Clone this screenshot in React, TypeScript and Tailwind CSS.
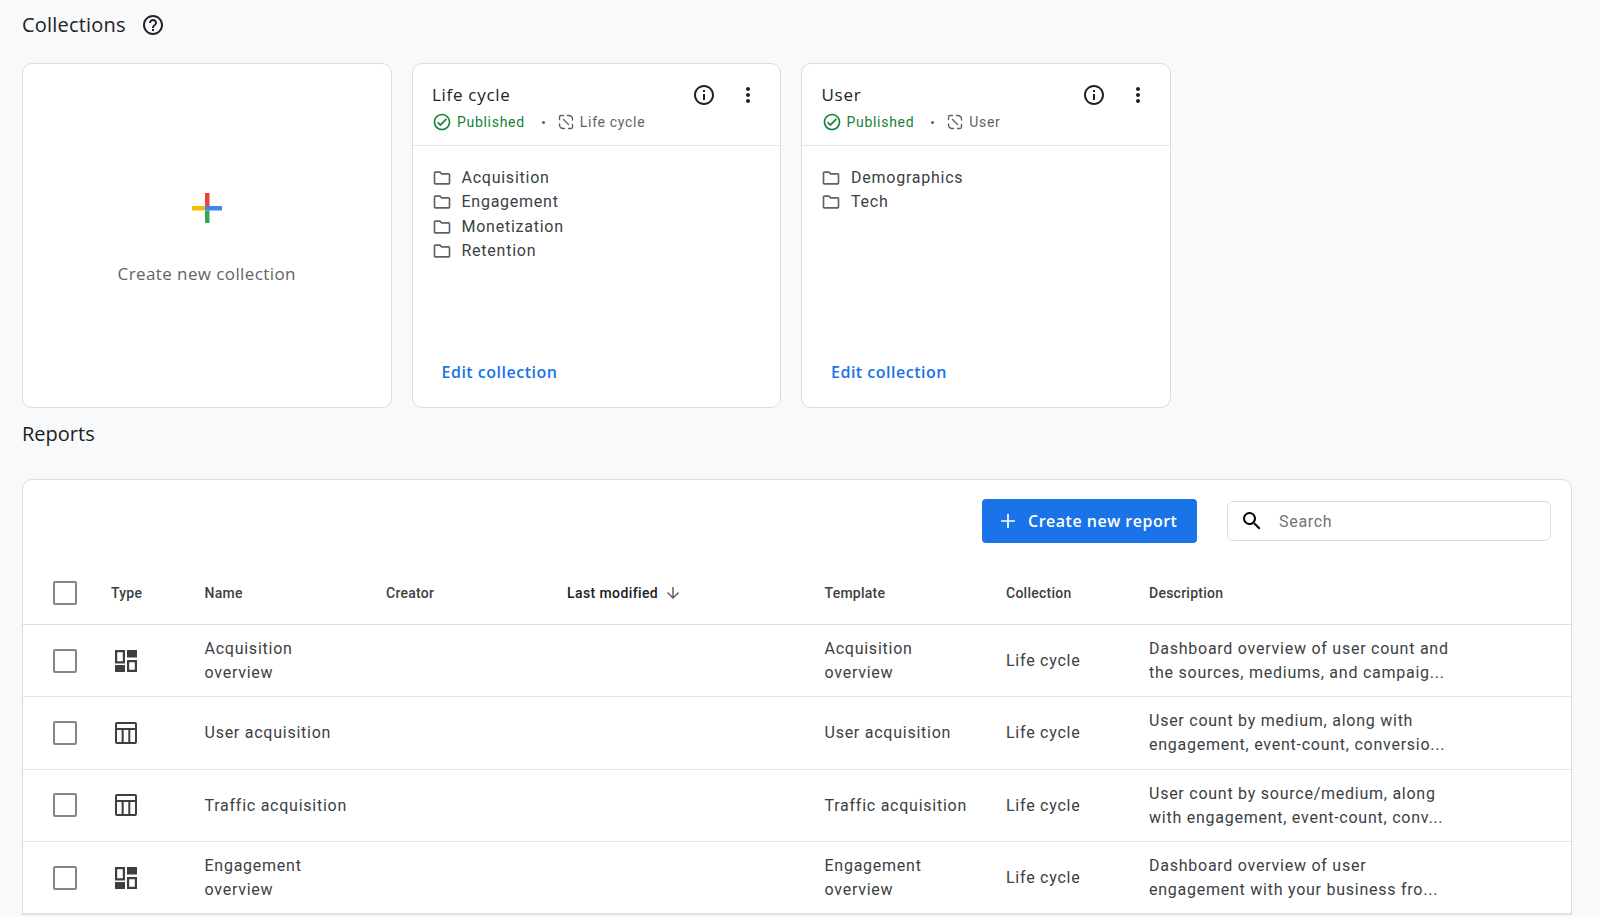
import React from "react";

const roboto = "font-['Roboto',sans-serif]";
const gsans = "font-['Open_Sans',sans-serif]";

function Help() {
  return (
    <svg width="24" height="24" viewBox="0 0 24 24" fill="#202124">
      <path d="M11 18h2v-2h-2v2zm1-16C6.48 2 2 6.48 2 12s4.48 10 10 10 10-4.48 10-10S17.52 2 12 2zm0 18c-4.41 0-8-3.59-8-8s3.59-8 8-8 8 3.59 8 8-3.59 8-8 8zm0-14c-2.21 0-4 1.79-4 4h2c0-1.1.9-2 2-2s2 .9 2 2c0 2-3 1.75-3 5h2c0-2.25 3-2.5 3-5 0-2.21-1.79-4-4-4z" />
    </svg>
  );
}
function Info() {
  return (
    <svg width="24" height="24" viewBox="0 0 24 24" fill="#202124">
      <path d="M11 7h2v2h-2zm0 4h2v6h-2zm1-9C6.48 2 2 6.48 2 12s4.48 10 10 10 10-4.48 10-10S17.52 2 12 2zm0 18c-4.41 0-8-3.59-8-8s3.59-8 8-8 8 3.59 8 8-3.59 8-8 8z" />
    </svg>
  );
}
function More() {
  return (
    <svg width="24" height="24" viewBox="0 0 24 24" fill="#202124">
      <path d="M12 8c1.1 0 2-.9 2-2s-.9-2-2-2-2 .9-2 2 .9 2 2 2zm0 2c-1.1 0-2 .9-2 2s.9 2 2 2 2-.9 2-2-.9-2-2-2zm0 6c-1.1 0-2 .9-2 2s.9 2 2 2 2-.9 2-2-.9-2-2-2z" />
    </svg>
  );
}
function Check() {
  return (
    <svg width="20" height="20" viewBox="0 0 24 24" fill="#188038">
      <path d="M12 2C6.48 2 2 6.48 2 12s4.48 10 10 10 10-4.48 10-10S17.52 2 12 2zm0 18c-4.41 0-8-3.59-8-8s3.59-8 8-8 8 3.59 8 8-3.59 8-8 8zm4.59-12.42L10 14.17l-2.59-2.58L6 13l4 4 8-8z" />
    </svg>
  );
}
function Linked() {
  return (
    <svg width="18" height="18" viewBox="0 0 18 18" fill="none" stroke="#5f6368" strokeWidth="1.4" strokeLinecap="round">
      <path d="M6.500 2.500H4A1.500 1.500 0 0 0 2.500 4v2.500" />
      <path d="M11.500 15.500H14a1.500 1.500 0 0 0 1.500-1.500v-2.500" />
      <path d="M10.500 2.500H12a3.500 3.500 0 0 1 3.500 3.500v1" />
      <path d="M7.500 15.500H6A3.500 3.500 0 0 1 2.500 12v-1" />
      <path d="M6.500 6.500l5 5" />
    </svg>
  );
}
function Folder() {
  return (
    <svg width="20" height="20" viewBox="0 0 24 24" fill="#5f6368">
      <path d="M20 6h-8l-2-2H4c-1.100 0-2 .9-2 2v12c0 1.100.9 2 2 2h16c1.100 0 2-.9 2-2V8c0-1.100-.9-2-2-2zm0 12H4V6h5.170l2 2H20v10z" />
    </svg>
  );
}
function Dash() {
  return (
    <svg width="24" height="24" viewBox="0 0 24 24">
      <path fill="#3c4043" fillRule="evenodd" d="M1 1h10v13.500H1V1zm2.200 2.200v9.100h5.600V3.200H3.200z" />
      <path fill="#3c4043" d="M13 1h10v7.500H13zM1 16h10v7H1z" />
      <path fill="#3c4043" fillRule="evenodd" d="M13 11h10v12H13V11zm2.200 2.200v7.600h5.600v-7.600h-5.600z" />
    </svg>
  );
}
function TableIcon() {
  return (
    <svg width="24" height="24" viewBox="0 0 24 24" fill="#3c4043">
      <path d="M21 1H3a2 2 0 0 0-2 2v18a2 2 0 0 0 2 2h18a2 2 0 0 0 2-2V3a2 2 0 0 0-2-2zm0 2v4H3V3h18zM3 21V9h4.600v12H3zm6.700 0V9h4.600v12H9.700zm6.600 0V9H21v12h-4.700z" />
    </svg>
  );
}
function Box() {
  return <div className="w-6 h-6 border-2 border-[#80868b] rounded-[2px] bg-white" />;
}

function Cardshell({ children }: { children: React.ReactNode }) {
  return (
    <div className="w-[369.5px] h-[344.5px] bg-white border border-[#dadce0] rounded-[10px] flex flex-col overflow-hidden">
      {children}
    </div>
  );
}

function CollectionCard({ title, folders }: { title: string; folders: string[] }) {
  return (
    <Cardshell>
      <div className="h-[82px] border-b border-[#e3e5e8] pl-[19.5px] pr-[20px] pt-[19px] shrink-0">
        <div className="flex items-center justify-between h-6">
          <span className={`${gsans} text-[17px] tracking-[0.7px] text-[#202124]`}>{title}</span>
          <div className="flex items-center gap-[20px]">
            <Info />
            <More />
          </div>
        </div>
        <div className={`${roboto} flex items-center text-[14px] tracking-[0.7px] mt-[3px] h-6`}>
          <Check />
          <span className="ml-[5px] text-[#188038]">Published</span>
          <span className="ml-[17px] w-[3px] h-[3px] rounded-full bg-[#5f6368]" />
          <span className="ml-[12px]">
            <Linked />
          </span>
          <span className="ml-[5px] text-[#5f6368]">{title}</span>
        </div>
      </div>
      <div className={`${roboto} flex-1 pl-[19px] pt-[19.5px] text-[16px] tracking-[0.75px] text-[#3c4043]`}>
        {folders.map((f) => (
          <div key={f} className="flex items-center h-[24.5px]">
            <Folder />
            <span className="ml-[10px]">{f}</span>
          </div>
        ))}
      </div>
      <div className={`${gsans} pl-[29px] pb-[23px] text-[16px] tracking-[0.5px] text-[#1a73e8] font-semibold`}>
        Edit collection
      </div>
    </Cardshell>
  );
}

const rows = [
  { icon: "dash", name: ["Acquisition", "overview"], tpl: ["Acquisition", "overview"], desc: ["Dashboard overview of user count and", "the sources, mediums, and campaig..."] },
  { icon: "table", name: ["User acquisition"], tpl: ["User acquisition"], desc: ["User count by medium, along with", "engagement, event-count, conversio..."] },
  { icon: "table", name: ["Traffic acquisition"], tpl: ["Traffic acquisition"], desc: ["User count by source/medium, along", "with engagement, event-count, conv..."] },
  { icon: "dash", name: ["Engagement", "overview"], tpl: ["Engagement", "overview"], desc: ["Dashboard overview of user", "engagement with your business fro..."] },
];

const cols = "grid grid-cols-[88px_93.5px_181.5px_181px_257.5px_181.5px_143px_1fr] items-center";

export default function App() {
  return (
    <div className={`${roboto} w-[1600px] h-[917px] overflow-hidden bg-[#f8f9fa] pl-[22px] pr-[28px]`}>
      <div className="flex items-center h-[50px]">
        <span className={`${gsans} text-[20px] tracking-[0.2px] text-[#202124]`}>Collections</span>
        <span className="ml-[15px]">
          <Help />
        </span>
      </div>
      <div className="flex gap-[20px] mt-[13px]">
        <Cardshell>
          <div className="flex-1 flex flex-col items-center pt-[129px]">
            <svg width="30" height="30" viewBox="0 0 30 30">
              <rect x="13" y="0" width="4.500" height="15" fill="#ea4335" />
              <rect x="0" y="13" width="13" height="4.500" fill="#fbbc04" />
              <rect x="13" y="13" width="17" height="4.500" fill="#4285f4" />
              <rect x="13" y="17.500" width="4.500" height="12.500" fill="#34a853" />
            </svg>
            <span className={`${gsans} mt-[38px] text-[17px] tracking-[0.4px] text-[#5f6368]`}>Create new collection</span>
          </div>
        </Cardshell>
        <CollectionCard title="Life cycle" folders={["Acquisition", "Engagement", "Monetization", "Retention"]} />
        <CollectionCard title="User" folders={["Demographics", "Tech"]} />
      </div>
      <div className={`${gsans} text-[20px] text-[#202124] mt-[12.5px] h-[28px] leading-[28px]`}>Reports</div>
      <div className="mt-[31px] bg-white border border-[#dadce0] rounded-t-[10px] w-[1550px]">
        <div className="flex items-center justify-end h-[82px] pr-[20px]">
          <button className="h-[44px] w-[215px] bg-[#1a73e8] rounded-[4px] flex items-center pl-[14px] text-white text-[16px] tracking-[0.5px] font-semibold font-['Open_Sans',sans-serif]">
            <svg width="24" height="24" viewBox="0 0 24 24" fill="none" stroke="#fff" strokeWidth="1.700">
              <path d="M12 5v14M5 12h14" />
            </svg>
            <span className="ml-[8px]">Create new report</span>
          </button>
          <div className="ml-[30px] w-[324px] h-[40px] border border-[#dadce0] rounded-[6px] flex items-center pl-[12px] text-[16px] tracking-[0.7px] text-[#70757a]">
            <svg width="24" height="24" viewBox="0 0 24 24" fill="#000">
              <path d="M15.500 14h-.79l-.28-.27A6.470 6.470 0 0 0 16 9.500 6.500 6.500 0 1 0 9.500 16c1.610 0 3.090-.59 4.230-1.570l.27.28v.79l5 4.990L20.490 19l-4.990-5zm-6 0C7.010 14 5 11.990 5 9.500S7.010 5 9.500 5 14 7.010 14 9.500 11.990 14 9.500 14z" />
            </svg>
            <span className="ml-[15px] pt-[2px]">Search</span>
          </div>
        </div>
        <div className={`${cols} h-[63px] border-b border-[#dadce0] text-[14px] tracking-[0.25px] font-medium text-[#3c4043]`}>
          <div className="pl-[30px]">
            <Box />
          </div>
          <div>Type</div>
          <div>Name</div>
          <div>Creator</div>
          <div className="flex items-center text-[#202124] tracking-[0.4px]">
            Last modified
            <svg className="ml-[6px]" width="18" height="18" viewBox="0 0 24 24" fill="#5f6368">
              <path d="M20 12l-1.410-1.410L13 16.170V4h-2v12.170l-5.580-5.590L4 12l8 8 8-8z" />
            </svg>
          </div>
          <div>Template</div>
          <div>Collection</div>
          <div>Description</div>
        </div>
        {rows.map((r) => (
          <div key={r.name[0]} className={`${cols} h-[72.3px] border-b border-[#e3e5e8] text-[16px] leading-[24px] tracking-[0.75px] text-[#3c4043]`}>
            <div className="pl-[30px]">
              <Box />
            </div>
            <div className="pl-[2.5px]">{r.icon === "dash" ? <Dash /> : <TableIcon />}</div>
            <div className="pt-[1px]">
              {r.name.map((l) => (
                <div key={l}>{l}</div>
              ))}
            </div>
            <div />
            <div />
            <div className="pt-[1px]">
              {r.tpl.map((l) => (
                <div key={l}>{l}</div>
              ))}
            </div>
            <div className="pt-[1px]">Life cycle</div>
            <div className="pt-[1px]">
              {r.desc.map((l) => (
                <div key={l}>{l}</div>
              ))}
            </div>
          </div>
        ))}
      </div>
    </div>
  );
}
